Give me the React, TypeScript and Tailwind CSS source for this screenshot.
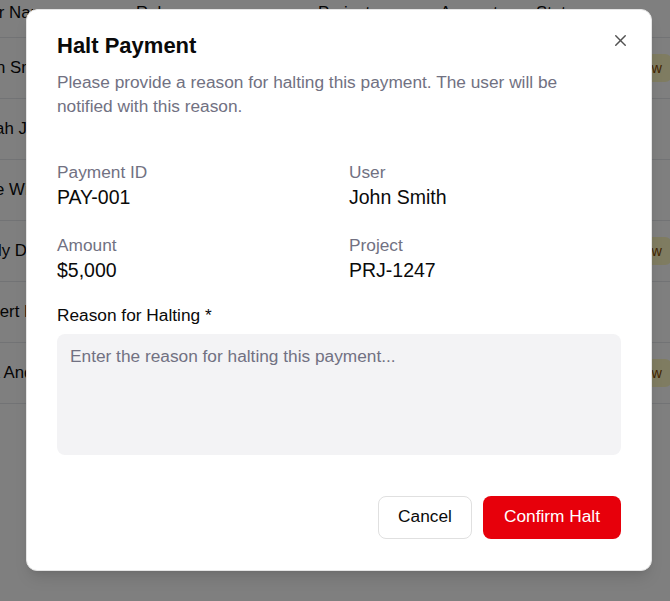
import { X } from 'lucide-react'

const rows = [
  { name: 'John Smith', role: 'Developer', project: 'PRJ-1247', amount: '$5,000', status: 'Pending Review' },
  { name: 'Sarah Johnson', role: 'Designer', project: 'PRJ-1248', amount: '$3,200', status: 'Approved' },
  { name: 'Mike Wilson', role: 'Manager', project: 'PRJ-1249', amount: '$7,500', status: 'Approved' },
  { name: 'Emily Davis', role: 'Analyst', project: 'PRJ-1250', amount: '$2,800', status: 'Pending Review' },
  { name: 'Robert Brown', role: 'Engineer', project: 'PRJ-1251', amount: '$4,100', status: 'Paid' },
  { name: 'Lisa Anderson', role: 'Consultant', project: 'PRJ-1252', amount: '$6,300', status: 'Pending Review' },
]

const cols = 'grid grid-cols-[167px_182px_122px_96px_1fr] items-center'

function StatusBadge({ status }: { status: string }) {
  const tone =
    status === 'Pending Review'
      ? 'bg-[#fef9c2] text-[#894b00]'
      : status === 'Approved'
        ? 'bg-[#dcfce7] text-[#016630]'
        : 'bg-[#dbeafe] text-[#193cb8]'
  return (
    <span className={`ml-[12px] whitespace-nowrap rounded-[7px] px-[10px] py-[4px] text-[14.4px] leading-[20px] ${tone}`}>
      {status}
    </span>
  )
}

function Info({ label, value }: { label: string; value: string }) {
  return (
    <div>
      <p className="text-[17.3px] leading-6 text-[#717182]">{label}</p>
      <p className="text-[19.5px] leading-[26.8px] text-[#0a0a0a]">{value}</p>
    </div>
  )
}

export default function App() {
  return (
    <div className="relative h-[601px] w-[670px] overflow-hidden bg-white font-['Liberation_Sans',Arial,sans-serif] text-[#0a0a0a]">
      {/* payments table behind the dialog */}
      <div className="mt-[-11px] ml-[-31px] w-[760px]">
        <div className={`${cols} h-[49px] border-b border-[#e5e7eb] text-[16.8px] font-medium`}>
          <span>User Name</span>
          <span>Role</span>
          <span>Project</span>
          <span>Amount</span>
          <span>Status</span>
        </div>
        {rows.map((row) => (
          <div key={row.name} className={`${cols} h-[61px] border-b border-[#e5e7eb] text-[16.8px]`}>
            <span className="whitespace-nowrap">{row.name}</span>
            <span>{row.role}</span>
            <span>{row.project}</span>
            <span>{row.amount}</span>
            <span className="flex">
              <StatusBadge status={row.status} />
            </span>
          </div>
        ))}
      </div>

      <div className="absolute inset-0 bg-black/50" />

      <div className="absolute top-[9px] left-[26px] w-[626px] rounded-[11px] border border-[#e5e5e5] bg-white px-[30px] pt-[25px] pb-[31px] shadow-lg">
        <button className="absolute top-[21px] right-[21px] text-[#0a0a0a] opacity-70">
          <X size={19} strokeWidth={1.8} />
        </button>

        <h2 className="text-[22px] leading-[22px] font-bold">Halt Payment</h2>
        <p className="mt-[13px] max-w-[530px] text-[17.3px] leading-6 text-[#717182]">
          Please provide a reason for halting this payment. The user will be notified with this reason.
        </p>

        <div className="mt-[42px] grid grid-cols-2 gap-x-[20px] gap-y-[22px]">
          <Info label="Payment ID" value="PAY-001" />
          <Info label="User" value="John Smith" />
          <Info label="Amount" value="$5,000" />
          <Info label="Project" value="PRJ-1247" />
        </div>

        <label className="mt-[19px] block text-[17.3px] leading-6 font-medium">Reason for Halting *</label>
        <textarea
          className="mt-[7px] block h-[121px] w-full resize-none rounded-[8px] border border-transparent bg-[#f3f3f5] px-[12px] py-[9px] text-[17.3px] leading-6 outline-none placeholder:text-[#717182]"
          placeholder="Enter the reason for halting this payment..."
        />

        <div className="mt-[41px] flex justify-end gap-[11px]">
          <button className="h-[43px] w-[94px] rounded-[8px] border border-[#e0e0e0] bg-white text-[17.3px]">
            Cancel
          </button>
          <button className="h-[43px] w-[138px] rounded-[8px] bg-[#e7000b] text-[17.3px] text-white">
            Confirm Halt
          </button>
        </div>
      </div>
    </div>
  )
}
